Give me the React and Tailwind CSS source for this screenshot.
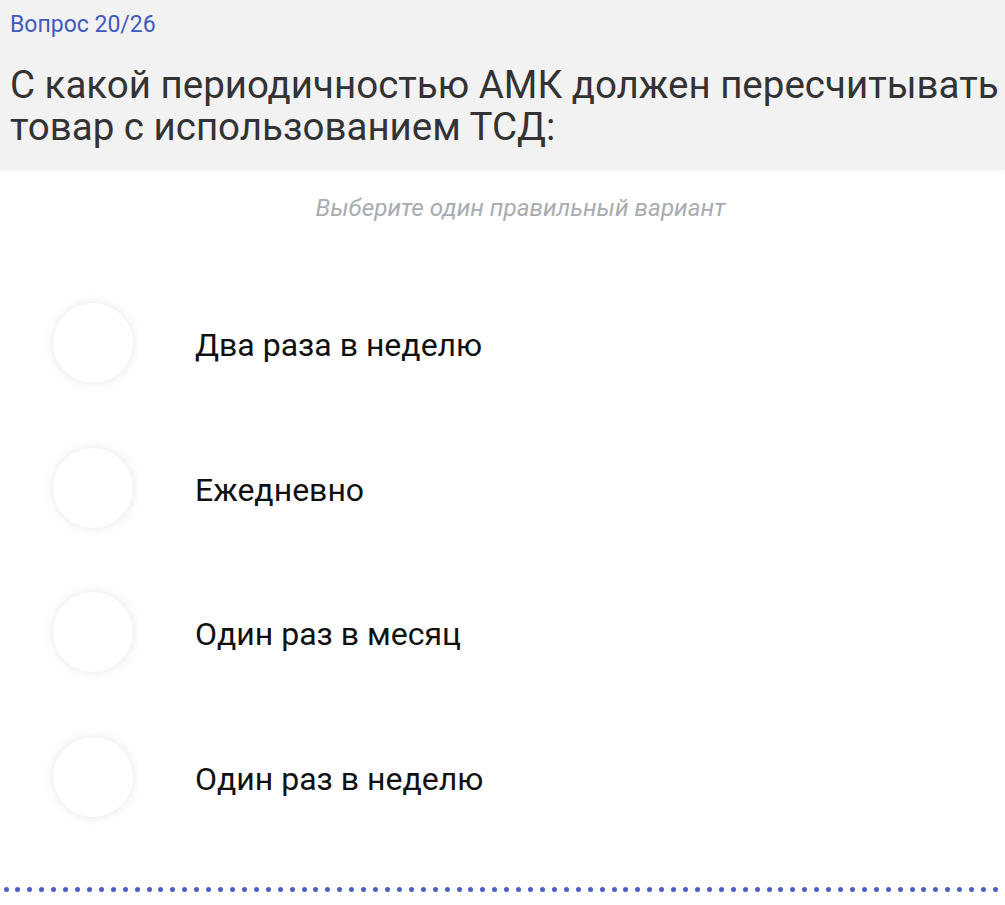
import React from "react";

const options = ["Два раза в неделю", "Ежедневно", "Один раз в месяц", "Один раз в неделю"];

export default function App() {
  const dots = Array.from({ length: 84 });
  return (
    <div className="w-[1005px] h-[905px] bg-white overflow-hidden font-['Roboto',sans-serif]">
      <div className="h-[170px] bg-[#f2f2f2] pl-[10px] pt-[11px] shadow-[0_2px_4px_rgba(0,0,0,0.04)] relative">
        <div className="text-[23px] leading-[28px] text-[#3f5bbd]">Вопрос 20/26</div>
        <div className="mt-[25px] text-[38.5px] leading-[42px] text-[#333333]">
          С какой периодичностью АМК должен пересчитывать товар с использованием ТСД:
        </div>
      </div>
      <div className="mt-[23px] pl-[36px] text-center italic text-[24.3px] leading-[30px] text-[#a9acb0]">
        Выберите один правильный вариант
      </div>
      <div className="mt-[48px] flex flex-col">
        {options.map((o) => (
          <div key={o} className="h-[144.5px] flex items-center">
            <div className="ml-[53px] w-[80px] h-[80px] rounded-full bg-white shadow-[0_0_12px_rgba(0,0,0,0.10)]" />
            <div className="ml-[62px] mt-[4px] text-[32px] leading-[36px] text-[#111111]">{o}</div>
          </div>
        ))}
      </div>
      <div className="mt-[38px] flex justify-between pl-[3.5px] pr-[6px]">
        {dots.map((_, i) => (
          <span key={i} className="block w-[5px] h-[5px] rounded-full bg-[#4b5fc4]" />
        ))}
      </div>
    </div>
  );
}
